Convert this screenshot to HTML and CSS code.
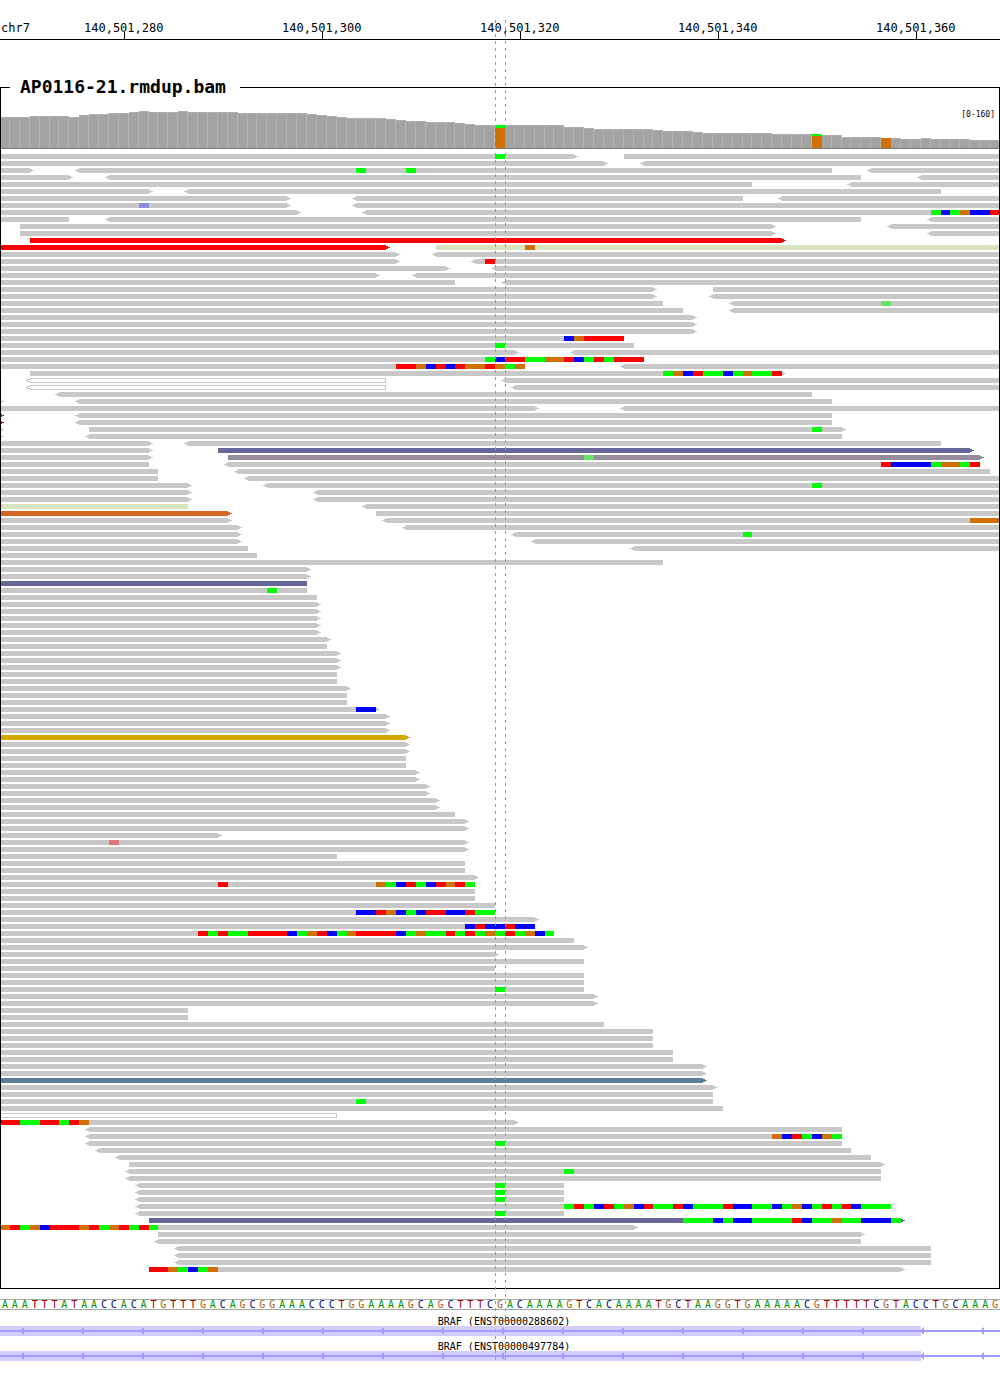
FILE: index.html
```html
<!DOCTYPE html>
<html lang="en">
<head>
<meta charset="utf-8">
<meta name="viewport" content="width=device-width, initial-scale=1">
<title>chr7 BRAF - AP0116-21.rmdup.bam</title>
<link rel="stylesheet" href="styles.css">
</head>
<body>
<main class="browser">
  <header class="ruler bases">
    <span class="chromosome">chr7</span>
    <span class="tick tick-280">140,501,280</span>
    <span class="tick tick-300">140,501,300</span>
    <span class="tick tick-320">140,501,320</span>
    <span class="tick tick-340">140,501,340</span>
    <span class="tick tick-360">140,501,360</span>
  </header>

  <fieldset class="sample">
    <legend class="sample-name">AP0116-21.rmdup.bam</legend>
    <div class="tracks">
      <div class="coverage bases" id="coverage">
        <span class="range">[0-160]</span>
      </div>
      <div class="pileup" id="pileup"></div>
    </div>
  </fieldset>

  <div class="sequence bases" id="sequence"></div>

  <section class="gene">
    <div class="gene-name">BRAF (ENST00000288602)</div>
    <div class="transcript bases">
      <div class="exon"></div>
      <svg class="strand" aria-hidden="true">
        <defs>
          <pattern id="minus" width="60" height="10" patternUnits="userSpaceOnUse">
            <path d="M0 4h60v2H0z"/>
            <path d="M20 5l4-4v8z"/>
          </pattern>
        </defs>
        <rect width="100%" height="10" fill="url(#minus)"/>
      </svg>
    </div>
  </section>
  <section class="gene">
    <div class="gene-name">BRAF (ENST00000497784)</div>
    <div class="transcript bases">
      <div class="exon"></div>
      <svg class="strand" aria-hidden="true"><rect width="100%" height="10" fill="url(#minus)"/></svg>
    </div>
  </section>

  <div class="focus bases" aria-hidden="true"><div class="focus-base"></div></div>
</main>
<script src="tracks.js"></script>
</body>
</html>
```
FILE: styles.css
```css
* {
  box-sizing: border-box;
}

body {
  margin: 0;
  background: #fff;
  color: #000;
  font-family: "DejaVu Sans Mono", monospace;
}

.browser {
  position: relative;
  isolation: isolate;
}

/* One column per base of the visible region */
.bases {
  display: grid;
  grid-template-columns: repeat(101, minmax(0, 1fr));
}

/* Ruler */
.ruler {
  height: 40px;
  padding-top: 20px;
  border-bottom: 1px solid #000;
  font-size: 12px;
  line-height: 16px;
}

.ruler > * {
  grid-row: 1;
}

.chromosome {
  grid-column: 1 / span 6;
  padding-left: 1px;
}

.tick {
  position: relative;
  text-align: center;
}

.tick::after {
  content: "";
  position: absolute;
  left: 50%;
  bottom: 0;
  width: 1px;
  height: 7px;
  background: #000;
}

.tick-280 { grid-column: 8 / span 11; }
.tick-300 { grid-column: 28 / span 11; }
.tick-320 { grid-column: 48 / span 11; }
.tick-340 { grid-column: 68 / span 11; }
.tick-360 { grid-column: 88 / span 11; }

/* Sample frame */
.sample {
  min-width: 0;
  margin: 37px 0 0;
  padding: 0 0 16px;
  border: 1px solid #000;
}

.sample-name {
  margin-left: 9px;
  padding: 0 14px 2px 10px;
  font-size: 18px;
  font-weight: bold;
  line-height: 19px;
}

/* The tracks run under the frame's side lines */
.tracks {
  position: relative;
  z-index: -1;
  margin: 0 -1px;
}

/* Coverage */
.coverage {
  position: relative;
  align-items: end;
  height: 51px;
  border-bottom: 1px solid #787878;
}

.range {
  position: absolute;
  top: 11px;
  right: 5px;
  font-size: 8px;
  line-height: 12px;
}

.depth {
  grid-row: 1;
  background: #a3a3a3;
  border-top: 1px solid #afafaf;
  border-right: 1px solid #b4b4b4;
}

.depth-variant {
  border-top: 0;
  border-right: 0;
  background: #d17105;
}

.depth-mixed { border-top: 3px solid #0f0; }
.depth-mixed-low { border-top: 2px solid #0f0; }

/* Reads */
.pileup {
  display: flex;
  flex-direction: column;
  gap: 2px;
  padding-top: 5px;
}

.row {
  height: 5px;
}

.read {
  position: relative;
  grid-row: 1;
  color: #c8c8c8;
  background: currentColor;
}

.read-forward::after,
.read-reverse::before {
  content: "";
  position: absolute;
  top: 1px;
  width: 4px;
  height: 3px;
}

.read-forward::after {
  left: 100%;
  background:
    linear-gradient(currentColor 0 0) 0 0 / 2px 3px no-repeat,
    linear-gradient(currentColor 0 0) 0 1px / 4px 1px no-repeat;
}

.read-reverse::before {
  right: 100%;
  background:
    linear-gradient(currentColor 0 0) 2px 0 / 2px 3px no-repeat,
    linear-gradient(currentColor 0 0) 0 1px / 4px 1px no-repeat;
}

.read-offscreen {
  grid-column: 1;
  justify-self: start;
  width: 0;
}

.red { color: #f00; }
.pale { color: #d8e3c0; }
.plum { color: #803060; }
.slate { color: #666699; }
.mauve { color: #958c9d; }
.orange { color: #d26526; }
.gold { color: #d4aa00; }
.teal { color: #5b7f97; }

.hollow {
  background: #fff;
  border: 1px solid currentColor;
}

.hollow.read-reverse {
  border-left: 0;
}

.hollow.read-reverse::before {
  top: 0;
  background:
    linear-gradient(currentColor 0 0) 1px 0 / 3px 1px no-repeat,
    linear-gradient(currentColor 0 0) 0 1px / 2px 1px no-repeat,
    linear-gradient(currentColor 0 0) 1px 2px / 3px 1px no-repeat;
}

.mismatch {
  position: relative;
  grid-row: 1;
}

.base-A { background: #0f0; }
.base-C { background: #00f; }
.base-G { background: #d17105; }
.base-T { background: #f00; }
.weak-A { background: #64e464; }
.weak-C { background: #8c8cdc; }
.weak-T { background: #e17878; }

/* Reference sequence */
.sequence {
  height: 11px;
  margin-top: 10px;
  border: 1px solid #a0aaa0;
  border-width: 1px 0;
  font-size: 10px;
  line-height: 10px;
  text-align: center;
}

.letter-A { color: #009000; }
.letter-C { color: #000080; }
.letter-G { color: #a06010; }
.letter-T { color: #a00000; }

/* Genes */
.gene {
  padding-top: 7px;
}

.gene-name {
  font-size: 10px;
  line-height: 8px;
  text-align: center;
  padding-left: 8px;
}

.gene:first-of-type {
  padding-top: 8px;
}

.transcript {
  height: 10px;
}

.exon {
  grid-area: 1 / 1 / 2 / 94;
  background: #d2ceff;
}

.strand {
  grid-area: 1 / 1 / 2 / -1;
  width: 100%;
  height: 10px;
  fill: #9f9bff;
}

/* Dashed guides either side of the base in focus */
.focus {
  position: absolute;
  inset: 20px 0 0;
  pointer-events: none;
}

.focus-base {
  grid-column: 51;
  margin-right: -1px;
  background:
    repeating-linear-gradient(#999 0 3px, transparent 3px 7px) left / 1px 100% no-repeat,
    repeating-linear-gradient(#999 0 3px, transparent 3px 7px) right / 1px 100% no-repeat;
}
```
FILE: tracks.js
```js
// Reads per row. "<" / ">" mark the strand arrow, "a-b" the span in bases,
// "=name" a colour, "+kSEQ" mismatched bases from base k (lower case: low quality),
// "off>" a read that ends at the left edge, "*n" repeats the row.
const ROWS = `
0-58> +50A 63-101
0-61> <65-101
0-3> <8-84 +36A +41A <88-101
0-7> <11-87 <93-101
0-76 <86-101
0-15> <19-95
0-29> <36-75 <79-101
0-29> +14c <36-101
0-30> <37-101 +94ACAGCCT
0-7 <11-87 <94-101
2-78> <90-101
2-78> <94-101
3-79>=red
0-39>=red 44-101=pale +53G
0-40> <44-101
0-40> <48-101 +49T
0-45> <50-101
0-38> <42-101
0-46 <51-101
0-66> 72-101
0-66> <72-101
0-67 <74-101 +89a
0-69 <74-101
0-70> *3
0-63 +57CGTTTT
0-64 +50A
0-52> <58-101
0-65 +49ACTTAAGGTCATATTT
0-53 +40TTGCTCTGGTGAG <63-101
3-79> +67AGCTAACAGAAT
<3-39=hollow <51-101
<3-39=hollow <52-101
<6-82
off> <8-84
0-54> <63-101
off>=plum <8-84
off>=red <8-84
off> 9-85> +82A
off> <9-85
0-15> <19-95
0-15> 22-98>=slate
0-15> 23-99>=mauve +59a
0-15 <23-99 +89TCCCCAGGAT
0-16 <24-100
0-16 <25-101
0-19> <27-101 +82A
0-19> <32-101 *2
0-19=pale <37-101
0-23>=orange 38-101
0-23> <39-101 +98GGG
0-24> <41-101
0-24> <52-101 +75A
0-24> <54-101
0-25 <64-101
0-26
0-67
0-31> *2
0-31=slate
0-31 +27A
0-32
0-32> *5
0-33>
0-33
0-34> *3
0-34 *2
0-35>
0-35 *2
0-38> +36CC
0-39> *3
0-41>=gold
0-41> *2
0-41 *2
0-42> *2
0-43> *2
0-44> *2
0-46
0-47> *2
0-22>
0-47> +11t
0-47>
0-34
0-47 *2
0-48>
0-48 +22T +38GACTACTGTA
0-48 *2
0-50
0-50 +36CCTGCACTTCCTAA
0-54>
0-54 +47CTCCTCC
0-56 +20TATAATTTTCAGTCAGTTTTCAGAATATAGATAGCA
0-58
0-59>
0-50>
0-59
0-50
0-59 *2
0-59 +50A
0-60> *2
0-19 *2
0-61
0-66 *3
0-68 *2
0-71> *2
0-71>=teal
0-72>
0-72
0-72 +36A
0-73
0-34=hollow
0-52> +0TTAATTATG
<9-85
<9-85 +78GCTACGA
<9-85 +50A
<10-86
<12-88
13-89>
<13-89 +57A
<13-89
<14-57 +50A *3
<14-90 +57ATACTAGCTAATCAAATCCAACAGCATATCAAA
<14-57 +50A
15-91>=slate +69AAACACCAAAATCAAGAACCCA
0-64> +0GTAGCTTTGTAGTATA
16-87>
<16-87
<18-94 *3
15-91> +15TTGACAG
`;

// Height of each coverage bar, as "height" or "height*bases"
const DEPTHS = "31*3 32*4 31 33 34*2 35*2 36 37 36*3 37 36*5 35*7 34 33 32 31 30*4 29 28 27*2 26*3 25 24 23*9 " +
  "21*2 20 19*6 18 17*3 16 15*7 14*5 13*2 11*4 10*2 9*2 10 9*4 8*3";

const VARIANTS = { 50: "depth-mixed", 82: "depth-mixed-low", 89: "depth-single" };

const SEQUENCE = "AAATTTATAACCACATGTTTGACAGCGGAAACCCTGGAAAAGCAGCTTTCG" +
  "ACAAAAGTCACAAAATGCTAAGGTGAAAAACGTTTTTCGTACCTGCAAAG";

function add(parent, className, from, to) {
  const el = document.createElement("div");
  el.className = className;
  if (from !== undefined) el.style.gridColumn = `${from + 1} / ${to + 1}`;
  parent.append(el);
  return el;
}

function addMismatches(row, token) {
  const [, start, bases] = token.match(/^\+(\d+)([A-Za-z]+)$/);
  [...bases].forEach((base, i) => {
    const letter = base.toUpperCase();
    const kind = base === letter ? "base-" : "weak-";
    add(row, `mismatch ${kind}${letter}`, +start + i, +start + i + 1);
  });
}

function addRead(row, token) {
  const [, left, span, right, colour] = token.match(/^(<?)(off|\d+-\d+)(>?)(?:=(\w+))?$/);
  const names = ["read"];
  if (left) names.push("read-reverse");
  if (right) names.push("read-forward");
  if (colour) names.push(colour);
  if (span === "off") {
    names.push("read-offscreen");
    add(row, names.join(" "));
  } else {
    const [from, to] = span.split("-").map(Number);
    add(row, names.join(" "), from, to);
  }
}

const pileup = document.getElementById("pileup");
for (const line of ROWS.trim().split("\n")) {
  const [tokens, times = 1] = line.split(" *");
  for (let n = 0; n < times; n++) {
    const row = add(pileup, "row bases");
    for (const token of tokens.split(" ")) {
      (token[0] === "+" ? addMismatches : addRead)(row, token);
    }
  }
}

const coverage = document.getElementById("coverage");
let base = 0;
for (const run of DEPTHS.split(" ")) {
  const [height, count = 1] = run.split("*").map(Number);
  for (let n = 0; n < count; n++, base++) {
    const variant = VARIANTS[base];
    const bar = add(coverage, variant ? `depth depth-variant ${variant}` : "depth", base, base + 1);
    bar.style.height = `${height}px`;
  }
}

const sequence = document.getElementById("sequence");
for (const letter of SEQUENCE) {
  const el = document.createElement("span");
  el.className = `letter-${letter}`;
  el.textContent = letter;
  sequence.append(el);
}
```
